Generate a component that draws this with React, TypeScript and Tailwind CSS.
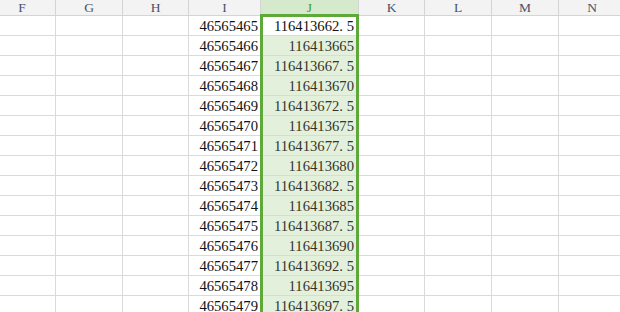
import React from 'react';

const COLS = [
  { name: 'F', w: 'w-[67px]' },
  { name: 'G', w: 'w-[67px]' },
  { name: 'H', w: 'w-[66px]' },
  { name: 'I', w: 'w-[72px]' },
  { name: 'J', w: 'w-[98px]' },
  { name: 'K', w: 'w-[66px]' },
  { name: 'L', w: 'w-[67px]' },
  { name: 'M', w: 'w-[67px]' },
  { name: 'N', w: 'w-[67px]' },
];

const rows = Array.from({ length: 15 }).map((_, i) => ({
  i: 46565465 + i,
  j: 116413662.5 + i * 2.5,
}));

// SimSun-like fixed pitch: the dot takes a full digit width
function Num({ v }: { v: number }) {
  const [a, b] = String(v).split('.');
  return (
    <span className="whitespace-nowrap">
      {a}
      {b !== undefined && (
        <>
          <span className="inline-block w-[7.33px]">.</span>
          {b}
        </>
      )}
    </span>
  );
}

export default function App() {
  return (
    <div className="relative w-[620px] h-[312px] overflow-hidden bg-white font-['Liberation_Serif',serif]">
      <div className="ml-[-11px] flex flex-col">
        {/* column header */}
        <div className="flex">
          {COLS.map(c => (
            <div
              key={c.name}
              className={`${c.w} shrink-0 h-[16px] border-r border-b border-[#d4d4d4] flex items-center justify-center text-[13.5px] leading-none ${
                c.name === 'J' ? 'bg-[#d5e9cc] text-[#4c9a2a]' : 'bg-[#f3f3f3] text-[#4a5264]'
              }`}
            >
              {c.name}
            </div>
          ))}
        </div>

        {rows.map((r, ri) => (
          <div key={r.i} className="flex">
            {COLS.map(c => {
              const sel = c.name === 'J';
              const active = sel && ri === 0;
              return (
                <div
                  key={c.name}
                  className={`${c.w} shrink-0 h-[20px] border-r border-b border-[#dadada] flex items-center justify-end text-[14.67px] leading-[20px] ${
                    active ? 'bg-white text-[#111] pr-[4px]' : sel ? 'bg-[#e3f1dc] text-[#35352a] pr-[4px]' : 'text-[#111] pr-[2px]'
                  }`}
                >
                  {c.name === 'I' && <Num v={r.i} />}
                  {sel && <Num v={r.j} />}
                </div>
              );
            })}
          </div>
        ))}
      </div>

      {/* selection frame on column J */}
      <div className="absolute left-[260px] top-[14px] w-[99px] h-[320px] border-[3px] border-[#5fa83a] pointer-events-none" />
    </div>
  );
}
